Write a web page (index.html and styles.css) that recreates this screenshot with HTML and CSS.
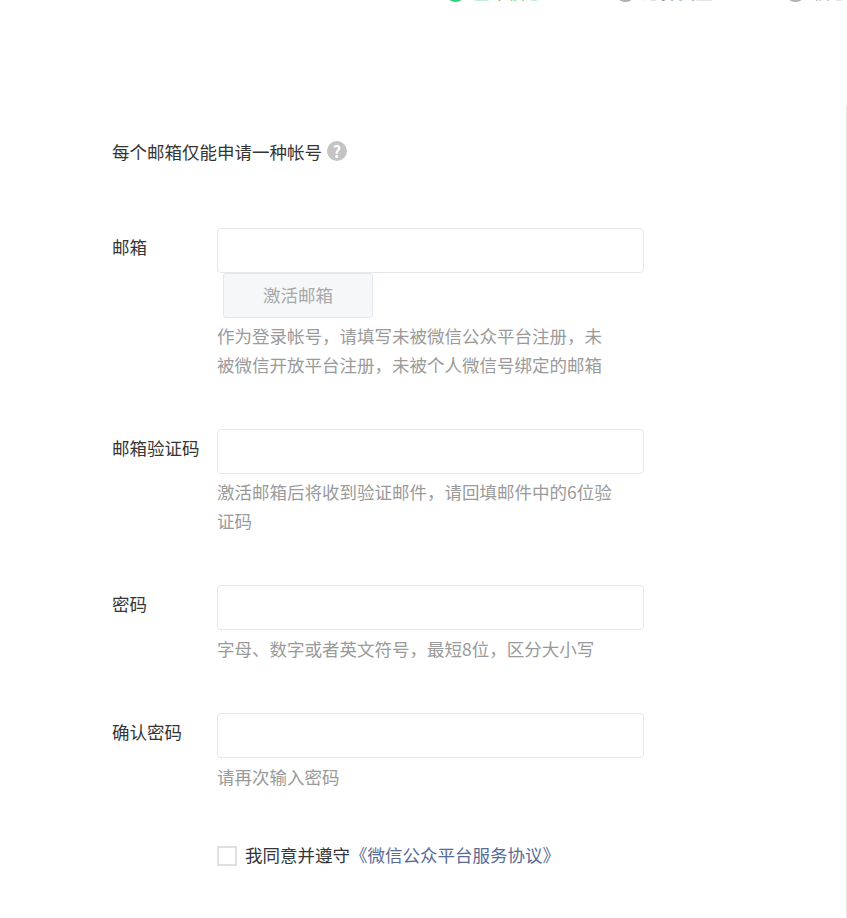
FILE: index.html
```html
<!DOCTYPE html>
<html lang="zh-CN">
<head>
    <meta charset="UTF-8">
    <meta name="viewport" content="width=device-width, initial-scale=1.0">
    <title>注册</title>
    <link rel="stylesheet" href="styles.css">
</head>
<body>
    <div class="steps">
        <div class="step step-active"><span class="step-num"></span><span class="step-name">基本信息</span></div>
        <div class="step step-two"><span class="step-num"></span><span class="step-name">选择类型</span></div>
        <div class="step step-three"><span class="step-num"></span><span class="step-name">信息</span></div>
    </div>

    <div class="panel">
        <p class="tips">每个邮箱仅能申请一种帐号 <span class="help">?</span></p>

        <div class="row row-email">
            <label class="label">邮箱</label>
            <div class="field">
                <input class="input" type="text">
                <button class="btn-active" type="button">激活邮箱</button>
                <p class="hint">作为登录帐号，请填写未被微信公众平台注册，未被微信开放平台注册，未被个人微信号绑定的邮箱</p>
            </div>
        </div>

        <div class="row row-code">
            <label class="label">邮箱验证码</label>
            <div class="field">
                <input class="input" type="text">
                <p class="hint">激活邮箱后将收到验证邮件，请回填邮件中的6位验证码</p>
            </div>
        </div>

        <div class="row row-pwd">
            <label class="label">密码</label>
            <div class="field">
                <input class="input" type="password">
                <p class="hint hint-short">字母、数字或者英文符号，最短8位，区分大小写</p>
            </div>
        </div>

        <div class="row row-confirm">
            <label class="label">确认密码</label>
            <div class="field">
                <input class="input" type="password">
                <p class="hint hint-short">请再次输入密码</p>
            </div>
        </div>

        <div class="agree">
            <span class="checkbox"></span>
            <span class="agree-text">我同意并遵守<a class="link" href="#">《微信公众平台服务协议》</a></span>
        </div>
    </div>
</body>
</html>
```

FILE: styles.css
```css
* {
    box-sizing: border-box;
}
html, body {
    height: 918px;
    overflow: hidden;
}
body {
    margin: 0;
    background: #fff;
    color: #353535;
    font-family: "Noto Sans CJK SC", "Liberation Sans", sans-serif;
    font-size: 17.5px;
}
.steps {
    height: 106px;
    overflow: hidden;
    position: relative;
}
.step {
    display: flex;
    align-items: flex-end;
    position: absolute;
    top: -24px;
    height: 26px;
    color: #9a9a9a;
    white-space: nowrap;
}
.step-active {
    left: 445px;
    color: #07c160;
}
.step-two {
    left: 615px;
}
.step-three {
    left: 785px;
}
.step-num {
    width: 21px;
    height: 21px;
    border: 2px solid currentColor;
    border-radius: 50%;
    margin-right: 7px;
    opacity: 0.8;
}
.step-name {
    line-height: 26px;
    margin-bottom: -3px;
}
.panel {
    height: 812px;
    padding: 31px 0 0 112px;
    border-right: 1px solid #e7e7eb;
}
.tips {
    margin: 0;
    height: 29px;
    line-height: 29px;
}
.help {
    display: inline-block;
    width: 20px;
    height: 20px;
    margin-left: 1px;
    border-radius: 50%;
    background: #c4c4c4;
    color: #fff;
    font-size: 16px;
    font-weight: 700;
    line-height: 20px;
    text-align: center;
    vertical-align: 1px;
}
.row {
    display: flex;
}
.row-email {
    margin-top: 62px;
}
.row-code {
    margin-top: 50px;
}
.row-pwd {
    margin-top: 50px;
}
.row-confirm {
    margin-top: 49.5px;
}
.label {
    width: 105px;
    line-height: 38px;
    flex: none;
}
.field {
    width: 427px;
}
.input {
    display: block;
    width: 427px;
    height: 45px;
    border: 1px solid #e7e7eb;
    border-radius: 4px;
    background: #fff;
    outline: none;
}
.btn-active {
    display: block;
    width: 150px;
    height: 45px;
    margin-left: 6px;
    padding-bottom: 3px;
    border: 1px solid #e4e8eb;
    border-radius: 3px;
    background: #f6f7f9;
    color: #a8a8a8;
    font-family: inherit;
    font-size: 17.5px;
}
.hint {
    margin: 4px 0 0;
    padding-right: 27px;
    color: #9a9a9a;
    line-height: 28.5px;
}
.hint-short {
    margin-top: 5px;
}
.agree {
    display: flex;
    align-items: center;
    margin: 48px 0 0 105px;
    line-height: 29px;
}
.agree-text {
    padding-bottom: 4px;
}
.checkbox {
    width: 20px;
    height: 20px;
    margin-right: 8px;
    border: 2px solid #dfe0e3;
}
.link {
    color: #576b95;
    text-decoration: none;
}
```
